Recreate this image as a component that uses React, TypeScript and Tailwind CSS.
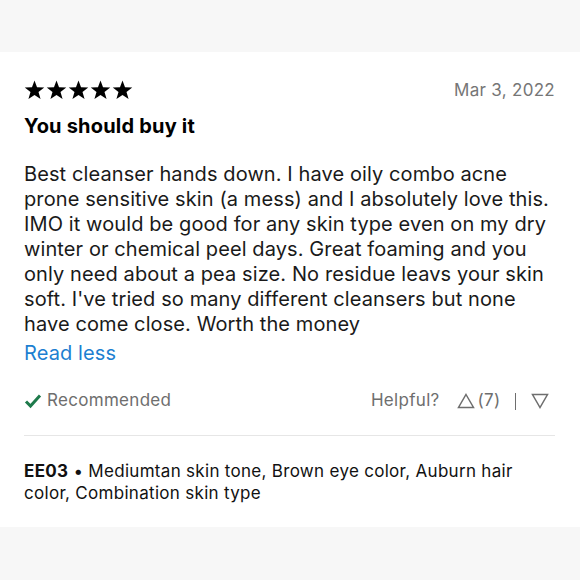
import React from "react";

const Star = () => (
  <svg width="21" height="20" viewBox="0 0 24 23" className="block">
    <polygon
      points="12,0.5 14.9,8.3 23.2,8.6 16.6,13.8 19,21.9 12,17.2 5,21.9 7.4,13.8 0.8,8.6 9.1,8.3"
      fill="#000"
    />
  </svg>
);

export default function App() {
  return (
    <div
      className="w-[580px] h-[580px] bg-[#f7f7f7] flex flex-col"
      style={{ fontFamily: "Inter, 'Noto Sans', sans-serif" }}
    >
      <div className="h-[52px] shrink-0" />
      <div className="bg-white h-[475px] pl-[24px] pr-[25px] pt-[28px]">
        <div className="flex items-center justify-between h-[20px]">
          <div className="flex gap-[1px]">
            <Star />
            <Star />
            <Star />
            <Star />
            <Star />
          </div>
          <div className="text-[17px] tracking-[0.3px] text-[#767676] leading-none">Mar 3, 2022</div>
        </div>
        <div className="mt-[14px] text-[20px] tracking-[0.2px] font-bold text-black leading-[24px]">You should buy it</div>
        <div className="mt-[24px] text-[20px] tracking-[0.1px] leading-[25px] text-[#1a1a1a]">
          Best cleanser hands down. I have oily combo acne
          <br />
          prone sensitive skin (a mess) and I absolutely love this.
          <br />
          IMO it would be good for any skin type even on my dry
          <br />
          winter or chemical peel days. Great foaming and you
          <br />
          only need about a pea size. No residue leavs your skin
          <br />
          soft. I've tried so many different cleansers but none
          <br />
          have come close. Worth the money
        </div>
        <div className="mt-[4px] text-[20px] tracking-[0.1px] leading-[25px] text-[#1d7fd1]">Read less</div>
        <div className="mt-[23px] flex items-center justify-between h-[24px]">
          <div className="flex items-center gap-[5px]">
            <svg width="18" height="16" viewBox="0 0 18 16">
              <path d="M2 8.5 L6.5 13 L16 2.5" fill="none" stroke="#1e7a4b" strokeWidth="3" />
            </svg>
            <span className="text-[17px] tracking-[0.3px] text-[#6e6e6e]">Recommended</span>
          </div>
          <div className="flex items-center text-[17px] tracking-[0.3px] text-[#6e6e6e] mr-[6px]">
            <span>Helpful?</span>
            <svg width="18" height="16" viewBox="0 0 18 16" className="ml-[17px]">
              <path d="M9 1.5 L16.5 14.5 L1.5 14.5 Z" fill="none" stroke="#6e6e6e" strokeWidth="1.5" strokeLinejoin="miter" />
            </svg>
            <span className="ml-[3px]">(7)</span>
            <span className="ml-[14px] inline-block w-[1.5px] h-[17px] bg-[#6e6e6e]" />
            <svg width="18" height="16" viewBox="0 0 18 16" className="ml-[15px]">
              <path d="M1.5 1.5 L16.5 1.5 L9 14.5 Z" fill="none" stroke="#6e6e6e" strokeWidth="1.5" />
            </svg>
          </div>
        </div>
        <div className="mt-[22px] h-px bg-[#e6e6e6]" />
        <div className="mt-[24px] text-[17px] tracking-[0.3px] leading-[22px] text-[#111]">
          <span className="font-bold">EE03</span> • Mediumtan skin tone, Brown eye color, Auburn hair
          <br />
          color, Combination skin type
        </div>
      </div>
    </div>
  );
}
